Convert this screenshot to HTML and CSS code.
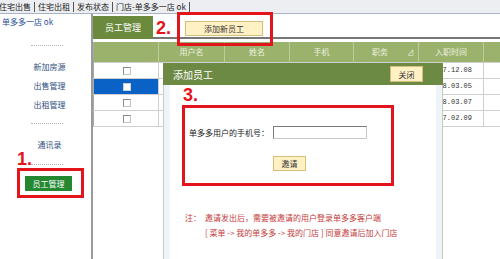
FILE: index.html
```html
<!DOCTYPE html>
<html lang="zh-CN">

<head>
    <meta charset="UTF-8">
    <title>员工管理 - 单多多</title>
    <link rel="stylesheet" href="styles.css">
</head>

<body>
    <div class="topbar">
        <span class="topbar-item first">住宅出售</span>
        <span class="topbar-item">住宅出租</span>
        <span class="topbar-item">发布状态</span>
        <span class="topbar-item">门店-单多多一店 ok</span>
    </div>

    <div class="layout">
        <div class="sidebar">
            <div class="store">单多多一店 ok</div>
            <div class="dots"></div>
            <a class="side-link top">新加房源</a>
            <a class="side-link">出售管理</a>
            <a class="side-link">出租管理</a>
            <div class="dots mid"></div>
            <a class="side-link top">通讯录</a>
            <div class="dots last"></div>
            <div class="side-btn">员工管理</div>
        </div>

        <div class="main">
            <div class="main-head">
                <div class="tab">员工管理</div>
                <div class="toolbar">
                    <button class="yellow-btn add-btn">添加新员工</button>
                </div>
            </div>

            <table class="staff">
                <colgroup>
                    <col style="width:65px">
                    <col style="width:66px">
                    <col style="width:65px">
                    <col style="width:64px">
                    <col style="width:65px">
                    <col style="width:65px">
                    <col style="width:60px">
                </colgroup>
                <tr>
                    <th></th>
                    <th>用户名</th>
                    <th>姓名</th>
                    <th>手机</th>
                    <th class="sort">职务<i class="arrow">⊿</i></th>
                    <th>入职时间</th>
                    <th>帐号</th>
                </tr>
                <tr>
                    <td class="check"><span class="box"></span></td>
                    <td></td><td></td><td></td><td></td>
                    <td class="date">2007.12.08</td>
                    <td></td>
                </tr>
                <tr class="selected">
                    <td class="check"><span class="box"></span></td>
                    <td></td><td></td><td></td><td></td>
                    <td class="date">2008.03.05</td>
                    <td></td>
                </tr>
                <tr>
                    <td class="check"><span class="box"></span></td>
                    <td></td><td></td><td></td><td></td>
                    <td class="date">2008.03.07</td>
                    <td></td>
                </tr>
                <tr>
                    <td class="check"><span class="box"></span></td>
                    <td></td><td></td><td></td><td></td>
                    <td class="date">2007.02.09</td>
                    <td></td>
                </tr>
            </table>

            <!-- popup dialog over the staff list -->
            <div class="dialog">
                <div class="dialog-title">
                    <span>添加员工</span>
                    <button class="yellow-btn close-btn">关闭</button>
                </div>
                <div class="dialog-body">
                    <div class="panel">
                        <div class="field">
                            <label class="field-label">单多多用户的手机号：</label>
                            <input class="field-input" type="text">
                        </div>
                        <button class="yellow-btn invite-btn">邀请</button>
                        <div class="notes">
                            <div class="note-line"><span class="note-label">注：</span>邀请发出后，需要被邀请的用户登录单多多客户端</div>
                            <div class="note-line indent">[ 菜单 -&gt; 我的单多多 -&gt; 我的门店 ] 同意邀请后加入门店</div>
                        </div>
                    </div>
                </div>
            </div>
        </div>
    </div>

    <!-- tutorial annotations -->
    <div class="step step-1">1.</div>
    <div class="mark mark-1"></div>
    <div class="step step-2">2.</div>
    <div class="mark mark-2"></div>
    <div class="step step-3">3.</div>
    <div class="mark mark-3"></div>
</body>

</html>
```

FILE: styles.css
```css
* {
    box-sizing: border-box;
}
body {
    margin: 0;
    width: 500px;
    height: 259px;
    overflow: hidden;
    position: relative;
    background: #fff;
    font-family: "Noto Sans CJK SC", "Liberation Sans", sans-serif;
    font-size: 8px;
    color: #333;
}
.topbar {
    height: 14px;
    display: flex;
    align-items: center;
    background: #eceef1;
    border-bottom: 1px solid #a9b4c2;
    white-space: nowrap;
}
.topbar-item {
    padding: 0 3px;
    line-height: 10px;
    border-right: 1px solid #555;
    color: #222;
}
.topbar-item.first {
    margin-left: -4px;
}
.layout {
    display: flex;
    height: 245px;
}
.sidebar {
    width: 93px;
    flex-shrink: 0;
    border-right: 2px solid #9a9a9a;
}
.store {
    margin-top: 2px;
    padding-left: 2px;
    line-height: 12px;
    color: #2a4f9a;
}
.dots {
    margin: 17px 0 0 31px;
    width: 32px;
    border-top: 1px dotted #b5b5b5;
}
.dots.mid {
    margin-top: 9px;
}
.dots.last {
    margin-top: 10px;
}
.side-link {
    display: block;
    line-height: 19px;
    padding-left: 8px;
    text-align: center;
    color: #2f4f80;
}
.side-link.top {
    margin-top: 11px;
}
.side-btn {
    margin: 11px 0 0 25px;
    width: 47px;
    height: 15px;
    line-height: 15px;
    text-align: center;
    background: #23882f;
    color: #fff;
}
.main {
    flex: 1;
    position: relative;
}
.main-head {
    display: flex;
    height: 25px;
}
.tab {
    width: 60px;
    margin-top: 2px;
    background: #6c8a3e;
    color: #fff;
    font-size: 9px;
    line-height: 23px;
    text-align: center;
}
.toolbar {
    flex: 1;
    border-bottom: 2px solid #777;
}
.yellow-btn {
    padding: 0;
    background: #fff1c4;
    border: 1px solid #d6bf7a;
    color: #333;
    font-family: "Noto Sans CJK SC", sans-serif;
    font-size: 8px;
}
.add-btn {
    margin: 7px 0 0 32px;
    width: 78px;
    height: 15px;
}
.staff {
    margin-top: 3px;
    border-collapse: collapse;
    table-layout: fixed;
    width: 450px;
}
.staff th {
    height: 20px;
    padding: 0;
    background: #9bb26c;
    color: #eef3e2;
    font-weight: normal;
    border-left: 1px solid #bccd9c;
}
.staff th:first-child {
    border-left: 1px solid #a8a8a8;
}
.staff th.sort {
    position: relative;
    padding-right: 12px;
}
.arrow {
    position: absolute;
    right: 4px;
    top: 5px;
    font-style: normal;
    font-size: 7px;
}
.staff td {
    height: 16px;
    padding: 0;
    border: 1px solid #cfcfcf;
}
.staff td:first-child {
    border-left-color: #a8a8a8;
}
.check {
    text-align: center;
}
.box {
    display: inline-block;
    width: 8px;
    height: 8px;
    margin-left: 2px;
    vertical-align: middle;
    background: #fff;
    border: 1px solid #8a8a8a;
    border-right-color: #c4c4c4;
    border-bottom-color: #c4c4c4;
}
.selected .check {
    background: #0b62c6;
}
.selected .box {
    border-color: #d0d0d0;
}
.date {
    text-align: center;
    font-family: "Liberation Mono", monospace;
    font-size: 7px;
    color: #333;
}
.dialog {
    position: absolute;
    left: 70px;
    top: 49px;
    width: 280px;
    bottom: 0;
    display: flex;
    flex-direction: column;
}
.dialog-title {
    height: 22px;
    flex-shrink: 0;
    display: flex;
    align-items: center;
    justify-content: space-between;
    padding: 0 20px 0 10px;
    background: #6d8a45;
    color: #fff;
    font-size: 10px;
}
.close-btn {
    width: 33px;
    height: 16px;
}
.dialog-body {
    flex: 1;
    display: flex;
    padding: 0 6px;
    background: #eef4fa;
    border-left: 1px solid #c4cfbb;
    border-right: 1px solid #c4cfbb;
}
.panel {
    flex: 1;
    padding: 41px 0 0 19px;
    background: #fff;
}
.field {
    display: flex;
    align-items: center;
    height: 13px;
}
.field-label {
    width: 84px;
    color: #222;
}
.field-input {
    width: 94px;
    height: 13px;
    padding: 0;
    background: #fff;
    border: 1px solid #c8c8c8;
    border-top-color: #7a7a7a;
    border-left-color: #7a7a7a;
}
.invite-btn {
    display: block;
    margin: 17px 0 0 84px;
    width: 33px;
    height: 15px;
}
.notes {
    margin: 39px 0 0 -4px;
    color: #c43a3a;
}
.note-line {
    line-height: 15px;
    white-space: nowrap;
}
.note-label {
    display: inline-block;
    width: 20px;
}
.note-line.indent {
    padding-left: 20px;
}
.step {
    position: absolute;
    font: bold 18px/18px "Liberation Sans", sans-serif;
    color: #e3141b;
}
.step-1 {
    left: 17px;
    top: 150px;
}
.step-2 {
    left: 156px;
    top: 19px;
}
.step-3 {
    left: 183px;
    top: 86px;
}
.mark {
    position: absolute;
    border: 3px solid #e3141b;
}
.mark-1 {
    left: 17px;
    top: 168px;
    width: 67px;
    height: 30px;
}
.mark-2 {
    left: 177px;
    top: 12px;
    width: 96px;
    height: 34px;
}
.mark-3 {
    left: 182px;
    top: 105px;
    width: 212px;
    height: 81px;
}
```
